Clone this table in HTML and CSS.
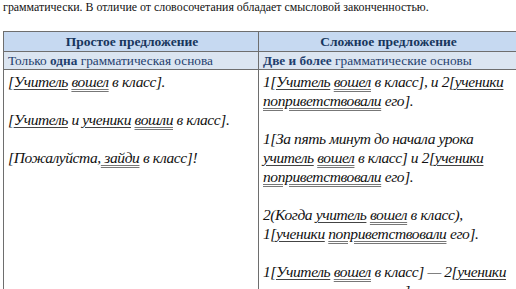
FILE: index.html
```html
<!DOCTYPE html>
<html>
<head>
<meta charset="utf-8">
<link rel="stylesheet" href="styles.css">
</head>
<body>
<p class="intro">грамматически. В отличие от словосочетания обладает смысловой законченностью.</p>
<table class="cmp">
  <colgroup><col class="c1"><col class="c2"></colgroup>
  <tr class="head">
    <th>Простое предложение</th>
    <th>Сложное предложение</th>
  </tr>
  <tr class="sub">
    <td>Только <b>одна</b> грамматическая основа</td>
    <td><b>Две и более</b> грамматические основы</td>
  </tr>
  <tr class="body">
    <td>
      <p>[<span class="s">Учитель</span> <span class="p">вошел</span> в класс].</p>
      <p class="gap">&nbsp;</p>
      <p>[<span class="s">Учитель</span> и <span class="s">ученики</span> <span class="p">вошли</span> в класс].</p>
      <p class="gap">&nbsp;</p>
      <p>[Пожалуйста,<span class="p"> зайди</span> в класс]!</p>
    </td>
    <td>
      <p>1[<span class="s">Учитель</span> <span class="p">вошел</span> в класс], и 2[<span class="s">ученики</span><br><span class="p">поприветствовали</span> его].</p>
      <p class="gap">&nbsp;</p>
      <p>1[За пять минут до начала урока<br><span class="s">учитель</span> <span class="p">вошел</span> в класс] и 2[<span class="s">ученики</span><br><span class="p">поприветствовали</span> его].</p>
      <p class="gap">&nbsp;</p>
      <p>2(Когда <span class="s">учитель</span> <span class="p">вошел</span> в класс),<br>1[<span class="s">ученики</span> <span class="p">поприветствовали</span> его].</p>
      <p class="gap">&nbsp;</p>
      <p>1[<span class="s">Учитель</span> <span class="p">вошел</span> в класс] — 2[<span class="s">ученики</span><br><span class="p">поприветствовали</span> его].</p>
    </td>
  </tr>
</table>
</body>
</html>
```
FILE: styles.css
```css
html, body {
  margin: 0;
  padding: 0;
  background: #fff;
  overflow: hidden;
}
body {
  font-family: "Liberation Serif", Tinos, serif;
  color: #000;
}
.intro {
  margin: -1px 0 0 3px;
  font-size: 11.9px;
  line-height: 17px;
  white-space: nowrap;
  color: #111;
}
.cmp {
  margin: 15px 0 0 3px;
  width: 513px;
  border-collapse: collapse;
  table-layout: fixed;
}
.c1 { width: 255px; }
.c2 { width: 258px; }
.cmp th, .cmp td {
  border: 1px solid #6e6e6e;
  padding: 0 2px 0 4px;
  vertical-align: top;
}
.cmp tr.head th {
  background: #c6d9f1;
  color: #17365d;
  font-size: 13.5px;
  font-weight: bold;
  height: 19px;
  line-height: 19px;
  text-align: center;
  vertical-align: middle;
}
.cmp tr.sub td {
  background: #dbe5f1;
  color: #1f3f6e;
  font-size: 13.3px;
  height: 17px;
  line-height: 17px;
  vertical-align: middle;
}
.cmp tr.body td {
  font-style: italic;
  font-size: 15.5px;
  letter-spacing: -0.4px;
  line-height: 19px;
  height: 240px;
  padding-top: 2px;
  color: #111;
  white-space: nowrap;
}
.cmp tr.body p {
  margin: 0;
}
.s {
  text-decoration: underline;
  text-decoration-color: #444;
  text-decoration-thickness: 1px;
  text-underline-offset: 2px;
}
.p {
  text-decoration: underline double;
  text-decoration-color: #777;
  text-decoration-thickness: 1px;
  text-underline-offset: 2px;
}
```
